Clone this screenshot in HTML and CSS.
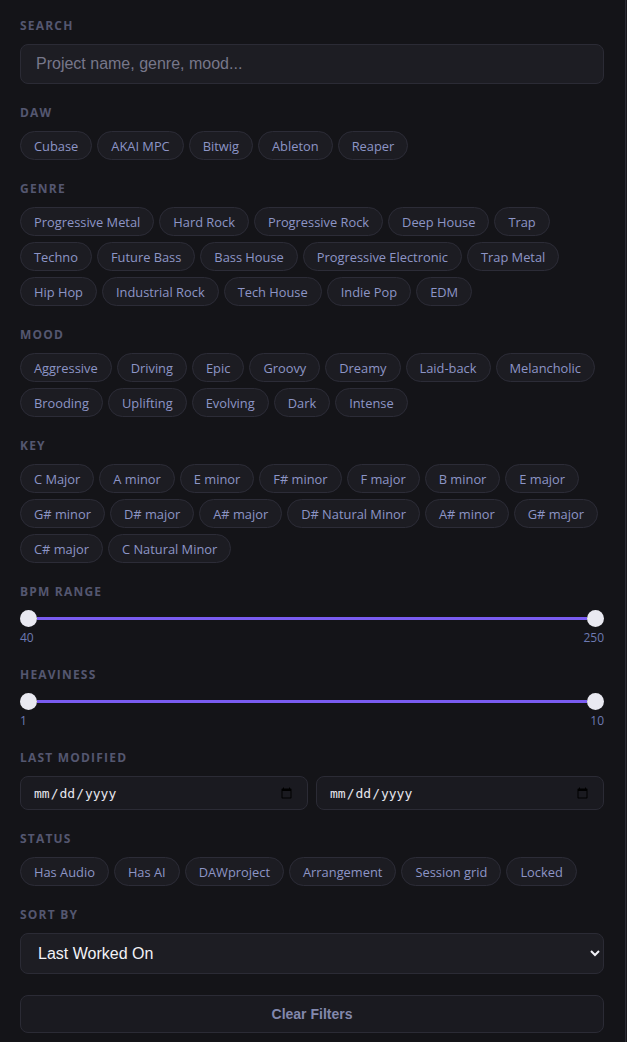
FILE: index.html
```html
<!DOCTYPE html>
<html lang="en">
<head>
<meta charset="utf-8">
<title>Filters</title>
<link rel="stylesheet" href="styles.css">
</head>
<body>
<aside class="panel">
  <section class="group">
    <div class="label">Search</div>
    <input class="search" type="text" placeholder="Project name, genre, mood...">
  </section>

  <section class="group">
    <div class="label">DAW</div>
    <div class="chips">
      <span class="chip">Cubase</span><span class="chip">AKAI MPC</span><span class="chip">Bitwig</span><span class="chip">Ableton</span><span class="chip">Reaper</span>
    </div>
  </section>

  <section class="group">
    <div class="label">Genre</div>
    <div class="chips">
      <span class="chip">Progressive Metal</span><span class="chip">Hard Rock</span><span class="chip">Progressive Rock</span><span class="chip">Deep House</span><span class="chip">Trap</span><span class="chip">Techno</span><span class="chip">Future Bass</span><span class="chip">Bass House</span><span class="chip">Progressive Electronic</span><span class="chip">Trap Metal</span><span class="chip">Hip Hop</span><span class="chip">Industrial Rock</span><span class="chip">Tech House</span><span class="chip">Indie Pop</span><span class="chip">EDM</span>
    </div>
  </section>

  <section class="group">
    <div class="label">Mood</div>
    <div class="chips">
      <span class="chip">Aggressive</span><span class="chip">Driving</span><span class="chip">Epic</span><span class="chip">Groovy</span><span class="chip">Dreamy</span><span class="chip">Laid-back</span><span class="chip">Melancholic</span><span class="chip">Brooding</span><span class="chip">Uplifting</span><span class="chip">Evolving</span><span class="chip">Dark</span><span class="chip">Intense</span>
    </div>
  </section>

  <section class="group">
    <div class="label">Key</div>
    <div class="chips">
      <span class="chip">C Major</span><span class="chip">A minor</span><span class="chip">E minor</span><span class="chip">F# minor</span><span class="chip">F major</span><span class="chip">B minor</span><span class="chip">E major</span><span class="chip">G# minor</span><span class="chip">D# major</span><span class="chip">A# major</span><span class="chip">D# Natural Minor</span><span class="chip">A# minor</span><span class="chip">G# major</span><span class="chip">C# major</span><span class="chip">C Natural Minor</span>
    </div>
  </section>

  <section class="group">
    <div class="label">BPM Range</div>
    <div class="range">
      <span class="thumb"></span><span class="track"></span><span class="thumb"></span>
    </div>
    <div class="range-values"><span>40</span><span>250</span></div>
  </section>

  <section class="group">
    <div class="label">Heaviness</div>
    <div class="range">
      <span class="thumb"></span><span class="track"></span><span class="thumb"></span>
    </div>
    <div class="range-values"><span>1</span><span>10</span></div>
  </section>

  <section class="group">
    <div class="label">Last Modified</div>
    <div class="dates">
      <input class="date" type="date">
      <input class="date" type="date">
    </div>
  </section>

  <section class="group">
    <div class="label">Status</div>
    <div class="chips">
      <span class="chip">Has Audio</span><span class="chip">Has AI</span><span class="chip">DAWproject</span><span class="chip">Arrangement</span><span class="chip">Session grid</span><span class="chip">Locked</span>
    </div>
  </section>

  <section class="group">
    <div class="label">Sort By</div>
    <select class="sort">
      <option>Last Worked On</option>
      <option>Name</option>
      <option>BPM</option>
    </select>
  </section>

  <button class="clear" type="button">Clear Filters</button>
</aside>
</body>
</html>
```

FILE: styles.css
```css
html {
  background: #18181d;
}

body {
  margin: 0;
  font-family: "Open Sans", "Noto Sans", sans-serif;
}

.panel {
  box-sizing: border-box;
  width: 626px;
  min-height: 1042px;
  background: #141418;
  border-right: 1px solid #2a2a33;
  padding: 18px 21px 10px 20px;
  display: flex;
  flex-direction: column;
  gap: 21px;
}

.group {
  display: flex;
  flex-direction: column;
}

.label {
  font-size: 12px;
  line-height: 16px;
  font-weight: 700;
  letter-spacing: 1.2px;
  text-transform: uppercase;
  color: #545770;
  margin-bottom: 10px;
}

.search {
  box-sizing: border-box;
  height: 40px;
  width: 100%;
  background: #1d1d23;
  border: 1px solid #2b2b35;
  border-radius: 8px;
  padding: 0 15px;
  font-family: "Liberation Sans", Arial, sans-serif;
  font-size: 16px;
  color: #e6e6ee;
  outline: none;
}

.search::placeholder {
  color: #77778a;
}

.chips {
  display: flex;
  flex-wrap: wrap;
  gap: 6px 5px;
}

.chip {
  box-sizing: border-box;
  height: 29px;
  padding: 0 13px;
  display: inline-flex;
  align-items: center;
  background: #1c1c22;
  border: 1px solid #2c2c37;
  border-radius: 15px;
  font-size: 12.85px;
  color: #8d95c6;
  white-space: nowrap;
}

.range {
  display: flex;
  align-items: center;
  height: 17px;
}

.thumb {
  width: 17px;
  height: 17px;
  border-radius: 50%;
  background: #e9e9f1;
  flex: none;
}

.track {
  flex: 1;
  height: 3px;
  background: #7a5cf0;
}

.range-values {
  display: flex;
  justify-content: space-between;
  font-size: 12px;
  line-height: 16px;
  color: #6d7ab2;
  margin-top: 3px;
}

.dates {
  display: flex;
  gap: 8px;
}

.date {
  box-sizing: border-box;
  flex: 1;
  min-width: 0;
  height: 34px;
  background: #1a1a20;
  border: 1px solid #2b2b35;
  border-radius: 8px;
  padding: 0 12px;
  font-family: "DejaVu Sans Mono", monospace;
  font-size: 13px;
  color: #e6e6ee;
  outline: none;
}

.sort {
  box-sizing: border-box;
  height: 41px;
  width: 100%;
  background: #1d1d23;
  border: 1px solid #2b2b35;
  border-radius: 8px;
  padding: 0 13px;
  font-family: "Liberation Sans", Arial, sans-serif;
  font-size: 16px;
  color: #f2f2f7;
  outline: none;
}

.clear {
  box-sizing: border-box;
  height: 38px;
  width: 100%;
  background: #1a1a20;
  border: 1px solid #2b2b35;
  border-radius: 8px;
  font-family: "Liberation Sans", Arial, sans-serif;
  font-size: 14px;
  font-weight: 700;
  color: #8288ad;
  cursor: pointer;
}
```
